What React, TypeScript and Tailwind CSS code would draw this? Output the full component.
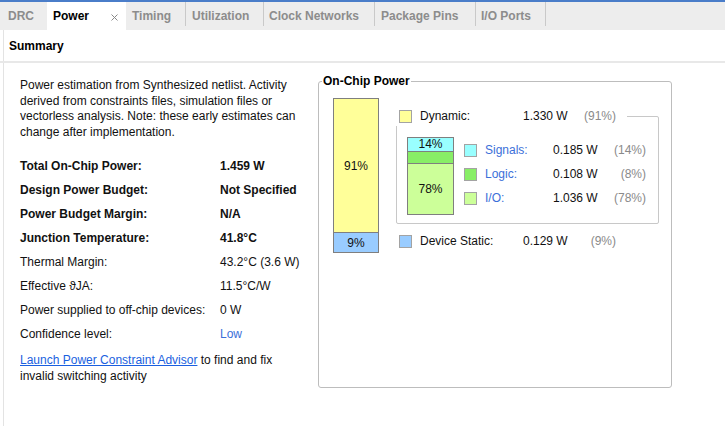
import React from "react";

type TabProps = { label: string; width: string; pad: string; sep?: boolean };

function Tab({ label, width, pad, sep }: TabProps) {
  return (
    <div className={`flex h-full ${width}`}>
      {sep && <div className="h-[24px] w-px bg-[#c9c9c9]" />}
      <div className={`flex items-center font-bold text-[#8c8c8c] ${pad}`}>{label}</div>
    </div>
  );
}

function Swatch({ color }: { color: string }) {
  return <div className={`h-[13px] w-[13px] shrink-0 border border-[#a3a3a3] ${color}`} />;
}

const summaryRows = [
  { label: "Total On-Chip Power:", value: "1.459 W", bold: true },
  { label: "Design Power Budget:", value: "Not Specified", bold: true },
  { label: "Power Budget Margin:", value: "N/A", bold: true },
  { label: "Junction Temperature:", value: "41.8°C", bold: true },
  { label: "Thermal Margin:", value: "43.2°C (3.6 W)" },
  { label: "Effective \u03D1JA:", value: "11.5°C/W" },
  { label: "Power supplied to off-chip devices:", value: "0 W" },
  { label: "Confidence level:", value: "Low", link: true },
];

const dynamicRows = [
  { name: "Signals:", value: "0.185 W", pct: "(14%)", color: "bg-[#99ffff]" },
  { name: "Logic:", value: "0.108 W", pct: "(8%)", color: "bg-[#88ee66]" },
  { name: "I/O:", value: "1.036 W", pct: "(78%)", color: "bg-[#ccff99]" },
];

export default function App() {
  return (
    <div className="flex h-[426px] w-[725px] flex-col overflow-hidden bg-white font-['Liberation_Sans',Arial,sans-serif] text-[12px] text-[#111]">
      {/* tab strip */}
      <div className="h-[2px] bg-[#4a7dc9]" />
      <div className="flex h-[28px] bg-[#ededed]">
        <Tab label="DRC" width="w-[47px]" pad="pl-[8px]" />
        <div className="flex h-full w-[79px] items-center justify-between bg-white pl-[6px] pr-[8px]">
          <span className="font-bold text-black">Power</span>
          <svg width="7" height="7" viewBox="0 0 7 7" className="mt-[2px]">
            <path d="M0.5 0.5L6.5 6.5M6.5 0.5L0.5 6.5" stroke="#8a8a8a" strokeWidth="1" />
          </svg>
        </div>
        <Tab label="Timing" width="w-[59px]" pad="pl-[6px]" />
        <Tab label="Utilization" width="w-[78px]" pad="pl-[6px]" sep />
        <Tab label="Clock Networks" width="w-[111px]" pad="pl-[5px]" sep />
        <Tab label="Package Pins" width="w-[101px]" pad="pl-[6px]" sep />
        <Tab label="I/O Ports" width="w-[70px]" pad="pl-[5px]" sep />
        <div className="h-[24px] w-px bg-[#c9c9c9]" />
      </div>

      {/* header */}
      <div className="ml-[3px] flex h-[31px] items-center border-l border-[#e3e3e3] pl-[5px] font-bold text-black">
        Summary
      </div>
      <div className="h-[2px] bg-[#e8e8e8]" />

      {/* body */}
      <div className="ml-[3px] flex flex-1 border-l border-[#e3e3e3] pl-[16px]">
        <div className="w-[282px] shrink-0 pt-[15px]">
          <p className="whitespace-nowrap leading-[15.5px]">
            Power estimation from Synthesized netlist. Activity
            <br />
            derived from constraints files, simulation files or
            <br />
            vectorless analysis. Note: these early estimates can
            <br />
            change after implementation.
          </p>

          <div className="mt-[14px]">
            {summaryRows.map((r) => (
              <div key={r.label} className={`flex h-[24px] items-center ${r.bold ? "font-bold" : ""}`}>
                <span className="w-[200px] shrink-0">{r.label}</span>
                <span className={r.link ? "text-[#3b6fd9]" : ""}>{r.value}</span>
              </div>
            ))}
          </div>

          <p className="mt-[6px] leading-[16px]">
            <span className="text-[#1a5fe0] underline">Launch Power Constraint Advisor</span> to find and fix
            <br />
            invalid switching activity
          </p>
        </div>

        {/* On-Chip Power */}
        <fieldset className="ml-[16px] mt-[11px] h-[314px] w-[354px] shrink-0 rounded-[3px] border border-[#bdbdbd] pl-[14px] pt-[10px]">
          <legend className="-ml-[11px] px-[1px] font-bold leading-[14px] text-black">On-Chip Power</legend>
          <div className="flex items-start">
            <div className="flex h-[155px] w-[46px] shrink-0 flex-col border border-[#7f7f7f]">
              <div className="flex flex-1 items-center justify-center border-b border-[#7f7f7f] bg-[#ffff99]">91%</div>
              <div className="flex h-[19px] items-center justify-center bg-[#99ccff]">9%</div>
            </div>

            <div className="ml-[17px] mt-[8px]">
              <div className="relative flex h-[20px] w-[231px] items-center bg-white pl-[3px]">
                <Swatch color="bg-[#ffff99]" />
                <span className="ml-[8px] w-[103px]">Dynamic:</span>
                <span className="w-[60px]">1.330 W</span>
                <span className="w-[33px] text-right text-[#8a8a8a]">(91%)</span>
              </div>

              <div className="-mt-[10px] flex h-[108px] w-[263px] items-start rounded-[2px] border border-[#c8c8c8] pl-[10px] pt-[20px]">
                <div className="flex h-[78px] w-[47px] shrink-0 flex-col border border-[#7f7f7f]">
                  <div className="flex h-[14px] items-center justify-center border-b border-[#7f7f7f] bg-[#99ffff] leading-[13px]">
                    14%
                  </div>
                  <div className="h-[12px] border-b border-[#7f7f7f] bg-[#88ee66]" />
                  <div className="flex flex-1 items-center justify-center bg-[#ccff99]">78%</div>
                </div>

                <div className="ml-[10px] mt-[1px]">
                  {dynamicRows.map((d) => (
                    <div key={d.name} className="flex h-[24px] items-center">
                      <Swatch color={d.color} />
                      <span className="ml-[8px] w-[68px] text-[#3b6fd9]">{d.name}</span>
                      <span className="w-[60px]">{d.value}</span>
                      <span className="w-[33px] text-right text-[#8a8a8a]">{d.pct}</span>
                    </div>
                  ))}
                </div>
              </div>

              <div className="mt-[7px] flex h-[20px] items-center pl-[3px]">
                <Swatch color="bg-[#99ccff]" />
                <span className="ml-[8px] w-[103px]">Device Static:</span>
                <span className="w-[60px]">0.129 W</span>
                <span className="w-[33px] text-right text-[#8a8a8a]">(9%)</span>
              </div>
            </div>
          </div>
        </fieldset>
      </div>
    </div>
  );
}
